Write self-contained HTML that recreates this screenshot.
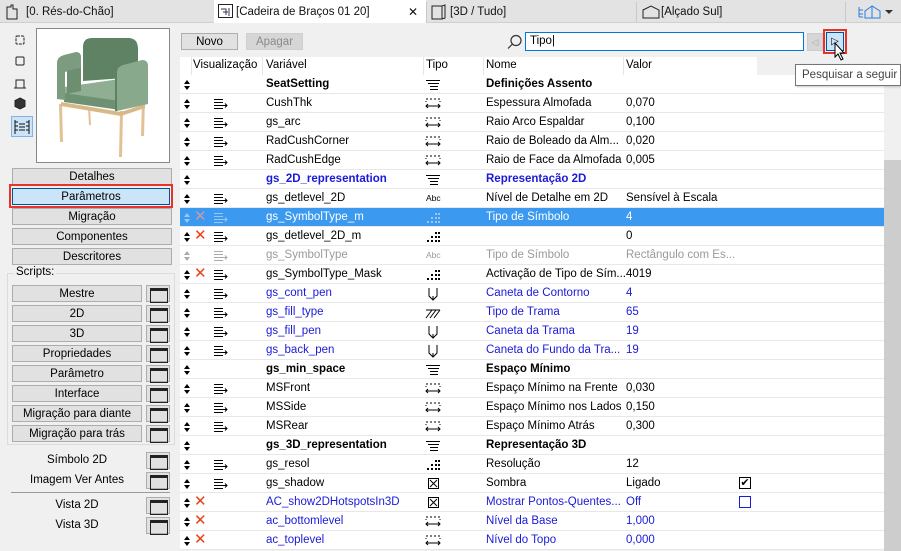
<!DOCTYPE html>
<html><head><meta charset="utf-8"><style>
*{box-sizing:border-box;margin:0;padding:0}
body{width:901px;height:551px;overflow:hidden;background:#f0f0f0;font-family:"Liberation Sans",sans-serif;font-size:11px;color:#000;position:relative}
.a{position:absolute}
.tab{position:absolute;top:0;height:23px;line-height:24px;font-size:11.5px;color:#111}
.btn{position:absolute;left:12px;width:160px;height:17px;border:1px solid #adadad;background:#e1e1e1;text-align:center;line-height:16px;font-size:11.5px}
.sb{position:absolute;left:12px;width:130px;height:17px;border:1px solid #adadad;background:#e1e1e1;text-align:center;line-height:16px;font-size:11.5px}
.ib{position:absolute;left:146px;width:24px;height:17px;border:1px solid #adadad;background:#e1e1e1}
.ib:after{content:"";position:absolute;left:3px;top:2px;width:16px;height:11px;border:1px solid #222;border-top:3px solid #222}
.lb{position:absolute;width:130px;left:12px;text-align:center;font-size:11.5px}
.row{position:absolute;left:180px;width:704px;height:19px;border-bottom:1px solid #e8e8e8;background:#fff;line-height:19px;font-size:11.5px}
.row span{position:absolute;top:0;white-space:nowrap}
.row svg{position:absolute}
.v{left:86px}.n{left:306px}.val{left:446px}
.x{left:14px;color:#e8401c;font-size:15px;line-height:18px}
.blue{color:#1a1ad8}.b{font-weight:bold}.g{color:#9a9a9a}
.sel{background:#3b99f0;color:#fff}
.sel span{color:#fff}
</style></head><body>
<svg width="0" height="0" style="position:absolute">
<defs>
<symbol id="ar" viewBox="0 0 8 12"><path d="M4 1l3 4h-6zM4 11l3-4h-6z" fill="currentColor"/></symbol>
<symbol id="pi" viewBox="0 0 16 12"><path d="M1 1.5h9M1 4.5h9M1 7.5h9M1 10.5h9M8 7.5h6M12 5.5l2 2-2 2" fill="none" stroke="currentColor"/></symbol>
<symbol id="len" viewBox="0 0 16 12"><path d="M1 1h2M5 1h2M9 1h2M13 1h2M1 3v1M15 3v1M1 8h14M3 6l-2 2 2 2M13 6l2 2-2 2" fill="none" stroke="currentColor"/></symbol>
<symbol id="tt" viewBox="0 0 16 12"><path d="M1 1.5h14M3 4.5h11M5 7.5h8M5 10.5h8" fill="none" stroke="currentColor"/></symbol>
<symbol id="int" viewBox="0 0 16 12"><path d="M10 1h2v2h-2zM13 1h2v2h-2zM10 5h2v2h-2zM13 5h2v2h-2zM6 5h2v2h-2zM2 9h2v2h-2zM6 9h2v2h-2zM10 9h2v2h-2zM13 9h2v2h-2z" fill="currentColor"/></symbol>
<symbol id="pen" viewBox="0 0 16 14"><path d="M4 1v8l4 4 4-4v-8M8 9v4" fill="none" stroke="currentColor"/></symbol>
<symbol id="fil" viewBox="0 0 16 12"><path d="M1 11l6-8M5 11l6-8M9 11l6-8M1 3h14" fill="none" stroke="currentColor"/></symbol>
<symbol id="bo" viewBox="0 0 16 12"><rect x="3.5" y="0.5" width="10" height="10" fill="none" stroke="currentColor"/><path d="M5 2l7 7M12 2l-7 7" stroke="currentColor"/></symbol>
</defs></svg>
<!-- tab bar -->
<div class="a" style="left:0;top:0;width:901px;height:23px;background:#e3e3e3;border-bottom:1px solid #d0d0d0"></div>
<div class="a" style="left:214px;top:0;width:212px;height:23px;background:#fff"></div>
<div class="a" style="left:426px;top:2px;width:1px;height:20px;background:#c8c8c8"></div>
<div class="a" style="left:636px;top:2px;width:1px;height:20px;background:#c8c8c8"></div>
<div class="a" style="left:845px;top:2px;width:1px;height:20px;background:#c8c8c8"></div>
<svg class="a" style="left:6px;top:4px" width="20" height="16"><path d="M1 3h4v-2h2v4h4v10h-10z" fill="none" stroke="#222"/></svg>
<div class="tab" style="left:26px">[0. Rés-do-Chão]</div>
<svg class="a" style="left:218px;top:4px" width="16" height="15"><rect x="0.5" y="0.5" width="14" height="13" fill="#fff" stroke="#222"/><path d="M3 5h5v6M5 8h5M11 4v8" stroke="#335" fill="none"/></svg>
<div class="tab" style="left:236px">[Cadeira de Braços 01 20]</div>
<div class="tab" style="left:408px;font-size:12px">✕</div>
<svg class="a" style="left:431px;top:4px" width="16" height="16"><path d="M1 2h10l3 -1v13l-3 1h-10z M11 2v13" fill="none" stroke="#222"/></svg>
<div class="tab" style="left:450px">[3D / Tudo]</div>
<svg class="a" style="left:642px;top:5px" width="18" height="14"><path d="M1 5l8-4 8 4v8h-16z" fill="none" stroke="#222"/></svg>
<div class="tab" style="left:661px">[Alçado Sul]</div>
<svg class="a" style="left:857px;top:5px" width="40" height="14"><path d="M2 2v10M2 5h4M2 9h4M2 12h4" stroke="#2a7de1" fill="none"/><path d="M8 6l7-5 8 5v7h-15zM15 1v12" stroke="#2a7de1" fill="none"/><path d="M28 5h8l-4 4z" fill="#333"/></svg>

<!-- left panel icons -->
<svg class="a" style="left:13px;top:33px" width="16" height="100" fill="none" stroke="#222">
<rect x="3" y="3" width="8" height="8" rx="1" stroke-dasharray="3 1"/>
<rect x="3" y="24" width="8" height="8" rx="1"/>
<path d="M3 55v-8h8v8M1 55h12"/>
<path d="M7 65l5 2.5v6l-5 2.5-5-2.5v-6z" fill="#333"/>
</svg>
<div class="a" style="left:11px;top:116px;width:22px;height:21px;background:#cde4f7;border:1px solid #7eb4ea"></div>
<svg class="a" style="left:13px;top:119px" width="18" height="16" fill="none" stroke="#111"><path d="M2 1v14M16 1v14M2 3h3M2 7h3M2 11h3M13 3h3M13 7h3M13 11h3M6 5h6M6 8h6M6 11h6"/></svg>
<!-- preview -->
<div class="a" style="left:36px;top:28px;width:134px;height:135px;background:#fff;border:1px solid #888"></div>
<svg class="a" style="left:37px;top:29px" width="132" height="132">
<path d="M22 75h3l1 38h-3zM83 82h3l-1 46h-3zM105 70h3l-1 37h-3zM51 78h2l1 18h-2z" fill="#e2c295"/>
<path d="M24 73l60 10 24-8v4l-24 8-60-10z" fill="#d9b888"/>
<path d="M46 18q0-9 9-9h36q10 0 10 11v28l-55 4z" fill="#5f8264"/>
<path d="M27 58l56-8 20 5v8l-20 9-56-6z" fill="#8fae92"/>
<path d="M27 64l56 8v9l-56-8z" fill="#6f9173"/>
<path d="M20 34q0-6 7-8l12-3q5 0 5 5v10l-16 5v28l-8-1z" fill="#7c9b7f"/>
<path d="M30 42l14-4v24l-14 3z" fill="#6e8e72"/>
<path d="M80 43q0-5 6-7l19-5q6 0 6 6v38l-31 7z" fill="#88a98b"/>
<path d="M80 44l-2 1v37l2 0z" fill="#5f8064"/>
</svg>

<div class="btn" style="top:168px">Detalhes</div>
<div class="a" style="left:9px;top:184px;width:164px;height:24px;border:2px solid #e8332a"></div>
<div class="btn" style="top:188px;background:#cce4f7;border-color:#005499;left:12px;width:158px">Parâmetros</div>
<div class="btn" style="top:208px">Migração</div>
<div class="btn" style="top:228px">Componentes</div>
<div class="btn" style="top:248px">Descritores</div>
<div class="a" style="left:7px;top:273px;width:168px;height:172px;border:1px solid #dcdcdc"></div>
<div class="a" style="left:14px;top:266px;background:#f0f0f0;padding:0 2px;font-size:11.5px">Scripts:</div>
<div class="sb" style="top:285px">Mestre</div><div class="ib" style="top:285px"></div>
<div class="sb" style="top:305px">2D</div><div class="ib" style="top:305px"></div>
<div class="sb" style="top:325px">3D</div><div class="ib" style="top:325px"></div>
<div class="sb" style="top:345px">Propriedades</div><div class="ib" style="top:345px"></div>
<div class="sb" style="top:365px">Parâmetro</div><div class="ib" style="top:365px"></div>
<div class="sb" style="top:385px">Interface</div><div class="ib" style="top:385px"></div>
<div class="sb" style="top:405px">Migração para diante</div><div class="ib" style="top:405px"></div>
<div class="sb" style="top:425px">Migração para trás</div><div class="ib" style="top:425px"></div>
<div class="lb" style="top:454px">Símbolo 2D</div><div class="ib" style="top:452px"></div>
<div class="lb" style="top:474px">Imagem Ver Antes</div><div class="ib" style="top:472px"></div>
<div class="a" style="left:11px;top:492px;width:159px;height:1px;background:#999"></div>
<div class="lb" style="top:499px">Vista 2D</div><div class="ib" style="top:497px"></div>
<div class="lb" style="top:519px">Vista 3D</div><div class="ib" style="top:517px"></div>

<!-- toolbar -->
<div class="a" style="left:181px;top:33px;width:57px;height:17px;border:1px solid #adadad;background:#e1e1e1;text-align:center;line-height:16px;font-size:11.5px">Novo</div>
<div class="a" style="left:246px;top:33px;width:57px;height:17px;border:1px solid #cfcfcf;background:#d6d6d6;text-align:center;line-height:16px;font-size:11.5px;color:#8a8a8a">Apagar</div>
<svg class="a" style="left:507px;top:34px" width="16" height="16" fill="none" stroke="#333" stroke-width="1.2"><circle cx="9" cy="6.5" r="5"/><path d="M5.5 10l-4.5 4.5"/></svg>
<div class="a" style="left:525px;top:32px;width:279px;height:19px;background:#fff;border:1px solid #0078d7;padding-left:4px;line-height:17px;font-size:11.5px">Tipo|</div>
<div class="a" style="left:807px;top:33px;width:16px;height:18px;background:#d6d6d6;border:1px solid #ccc;color:#aaa;font-size:9px;text-align:center;line-height:16px">◁</div>
<div class="a" style="left:823px;top:29px;width:24px;height:25px;border:2px solid #e8332a"></div>
<div class="a" style="left:826px;top:32px;width:18px;height:19px;background:#cce4f7;border:1px solid #005499;font-size:10px;text-align:center;line-height:17px">▷</div>
<svg class="a" style="left:834px;top:42px" width="14" height="20"><path d="M1 1v14l3-3 3 6 2-1-3-6h4z" fill="#fff" stroke="#000"/></svg>

<!-- table header -->
<div class="a" style="left:180px;top:57px;width:577px;height:18px;background:#fff"></div>
<div class="a" style="left:191px;top:57px;width:1px;height:18px;background:#e5e5e5"></div>
<div class="a" style="left:262px;top:57px;width:1px;height:18px;background:#e5e5e5"></div>
<div class="a" style="left:423px;top:57px;width:1px;height:18px;background:#e5e5e5"></div>
<div class="a" style="left:483px;top:57px;width:1px;height:18px;background:#e5e5e5"></div>
<div class="a" style="left:623px;top:57px;width:1px;height:18px;background:#e5e5e5"></div>
<div class="a" style="left:193px;top:59px;font-size:11.5px">Visualização</div>
<div class="a" style="left:266px;top:59px;font-size:11.5px">Variável</div>
<div class="a" style="left:426px;top:59px;font-size:11.5px">Tipo</div>
<div class="a" style="left:486px;top:59px;font-size:11.5px">Nome</div>
<div class="a" style="left:626px;top:59px;font-size:11.5px">Valor</div>

<!-- rows -->
<div class="row" style="top:75px"><svg style="left:3px;top:4px" width="8" height="12"><use href="#ar"/></svg><span class="v b">SeatSetting</span><svg style="left:245px;top:4px" width="16" height="12" color="#000"><use href="#tt"/></svg><span class="n b">Definições Assento</span></div>
<div class="row" style="top:94px"><svg style="left:3px;top:4px" width="8" height="12"><use href="#ar"/></svg><svg style="left:33px;top:4px" width="16" height="12" color="#000"><use href="#pi"/></svg><span class="v">CushThk</span><svg style="left:245px;top:4px" width="16" height="12" color="#000"><use href="#len"/></svg><span class="n">Espessura Almofada</span><span class="val">0,070</span></div>
<div class="row" style="top:113px"><svg style="left:3px;top:4px" width="8" height="12"><use href="#ar"/></svg><svg style="left:33px;top:4px" width="16" height="12" color="#000"><use href="#pi"/></svg><span class="v">gs_arc</span><svg style="left:245px;top:4px" width="16" height="12" color="#000"><use href="#len"/></svg><span class="n">Raio Arco Espaldar</span><span class="val">0,100</span></div>
<div class="row" style="top:132px"><svg style="left:3px;top:4px" width="8" height="12"><use href="#ar"/></svg><svg style="left:33px;top:4px" width="16" height="12" color="#000"><use href="#pi"/></svg><span class="v">RadCushCorner</span><svg style="left:245px;top:4px" width="16" height="12" color="#000"><use href="#len"/></svg><span class="n">Raio de Boleado da Alm...</span><span class="val">0,020</span></div>
<div class="row" style="top:151px"><svg style="left:3px;top:4px" width="8" height="12"><use href="#ar"/></svg><svg style="left:33px;top:4px" width="16" height="12" color="#000"><use href="#pi"/></svg><span class="v">RadCushEdge</span><svg style="left:245px;top:4px" width="16" height="12" color="#000"><use href="#len"/></svg><span class="n">Raio de Face da Almofada</span><span class="val">0,005</span></div>
<div class="row" style="top:170px"><svg style="left:3px;top:4px" width="8" height="12"><use href="#ar"/></svg><span class="v b blue">gs_2D_representation</span><svg style="left:245px;top:4px" width="16" height="12" color="#000"><use href="#tt"/></svg><span class="n b blue">Representação 2D</span></div>
<div class="row" style="top:189px"><svg style="left:3px;top:4px" width="8" height="12"><use href="#ar"/></svg><svg style="left:33px;top:4px" width="16" height="12" color="#000"><use href="#pi"/></svg><span class="v">gs_detlevel_2D</span><span style="left:246px;font-size:8.5px">Abc</span><span class="n">Nível de Detalhe em 2D</span><span class="val">Sensível à Escala</span></div>
<div class="row sel" style="top:208px"><svg style="left:3px;top:4px" width="8" height="12" color="#9cc6f2"><use href="#ar"/></svg><span class="x" style="color:#c89aa8">✕</span><svg style="left:33px;top:4px" width="16" height="12" color="#9cc6f2"><use href="#pi"/></svg><span class="v">gs_SymbolType_m</span><svg style="left:245px;top:4px" width="16" height="12" color="#9cc6f2"><use href="#int"/></svg><span class="n">Tipo de Símbolo</span><span class="val">4</span></div>
<div class="row" style="top:227px"><svg style="left:3px;top:4px" width="8" height="12"><use href="#ar"/></svg><span class="x">✕</span><svg style="left:33px;top:4px" width="16" height="12" color="#000"><use href="#pi"/></svg><span class="v">gs_detlevel_2D_m</span><svg style="left:245px;top:4px" width="16" height="12" color="#000"><use href="#int"/></svg><span class="val">0</span></div>
<div class="row g" style="top:246px"><svg style="left:3px;top:4px" width="8" height="12" color="#aaa"><use href="#ar"/></svg><svg style="left:33px;top:4px" width="16" height="12" color="#aaa"><use href="#pi"/></svg><span class="v">gs_SymbolType</span><span style="left:246px;font-size:8.5px">Abc</span><span class="n">Tipo de Símbolo</span><span class="val">Rectângulo com Es...</span></div>
<div class="row" style="top:265px"><svg style="left:3px;top:4px" width="8" height="12"><use href="#ar"/></svg><span class="x">✕</span><svg style="left:33px;top:4px" width="16" height="12" color="#000"><use href="#pi"/></svg><span class="v">gs_SymbolType_Mask</span><svg style="left:245px;top:4px" width="16" height="12" color="#000"><use href="#int"/></svg><span class="n">Activação de Tipo de Sím...</span><span class="val">4019</span></div>
<div class="row blue" style="top:284px"><svg style="left:3px;top:4px" width="8" height="12" color="#000"><use href="#ar"/></svg><svg style="left:33px;top:4px" width="16" height="12" color="#000"><use href="#pi"/></svg><span class="v">gs_cont_pen</span><svg style="left:245px;top:3px" width="16" height="14" color="#000"><use href="#pen"/></svg><span class="n">Caneta de Contorno</span><span class="val">4</span></div>
<div class="row blue" style="top:303px"><svg style="left:3px;top:4px" width="8" height="12" color="#000"><use href="#ar"/></svg><svg style="left:33px;top:4px" width="16" height="12" color="#000"><use href="#pi"/></svg><span class="v">gs_fill_type</span><svg style="left:245px;top:4px" width="16" height="12" color="#000"><use href="#fil"/></svg><span class="n">Tipo de Trama</span><span class="val">65</span></div>
<div class="row blue" style="top:322px"><svg style="left:3px;top:4px" width="8" height="12" color="#000"><use href="#ar"/></svg><svg style="left:33px;top:4px" width="16" height="12" color="#000"><use href="#pi"/></svg><span class="v">gs_fill_pen</span><svg style="left:245px;top:3px" width="16" height="14" color="#000"><use href="#pen"/></svg><span class="n">Caneta da Trama</span><span class="val">19</span></div>
<div class="row blue" style="top:341px"><svg style="left:3px;top:4px" width="8" height="12" color="#000"><use href="#ar"/></svg><svg style="left:33px;top:4px" width="16" height="12" color="#000"><use href="#pi"/></svg><span class="v">gs_back_pen</span><svg style="left:245px;top:3px" width="16" height="14" color="#000"><use href="#pen"/></svg><span class="n">Caneta do Fundo da Tra...</span><span class="val">19</span></div>
<div class="row" style="top:360px"><svg style="left:3px;top:4px" width="8" height="12"><use href="#ar"/></svg><span class="v b">gs_min_space</span><svg style="left:245px;top:4px" width="16" height="12" color="#000"><use href="#tt"/></svg><span class="n b">Espaço Mínimo</span></div>
<div class="row" style="top:379px"><svg style="left:3px;top:4px" width="8" height="12"><use href="#ar"/></svg><svg style="left:33px;top:4px" width="16" height="12" color="#000"><use href="#pi"/></svg><span class="v">MSFront</span><svg style="left:245px;top:4px" width="16" height="12" color="#000"><use href="#len"/></svg><span class="n">Espaço Mínimo na Frente</span><span class="val">0,030</span></div>
<div class="row" style="top:398px"><svg style="left:3px;top:4px" width="8" height="12"><use href="#ar"/></svg><svg style="left:33px;top:4px" width="16" height="12" color="#000"><use href="#pi"/></svg><span class="v">MSSide</span><svg style="left:245px;top:4px" width="16" height="12" color="#000"><use href="#len"/></svg><span class="n">Espaço Mínimo nos Lados</span><span class="val">0,150</span></div>
<div class="row" style="top:417px"><svg style="left:3px;top:4px" width="8" height="12"><use href="#ar"/></svg><svg style="left:33px;top:4px" width="16" height="12" color="#000"><use href="#pi"/></svg><span class="v">MSRear</span><svg style="left:245px;top:4px" width="16" height="12" color="#000"><use href="#len"/></svg><span class="n">Espaço Mínimo Atrás</span><span class="val">0,300</span></div>
<div class="row" style="top:436px"><svg style="left:3px;top:4px" width="8" height="12"><use href="#ar"/></svg><span class="v b">gs_3D_representation</span><svg style="left:245px;top:4px" width="16" height="12" color="#000"><use href="#tt"/></svg><span class="n b">Representação 3D</span></div>
<div class="row" style="top:455px"><svg style="left:3px;top:4px" width="8" height="12"><use href="#ar"/></svg><svg style="left:33px;top:4px" width="16" height="12" color="#000"><use href="#pi"/></svg><span class="v">gs_resol</span><svg style="left:245px;top:4px" width="16" height="12" color="#000"><use href="#int"/></svg><span class="n">Resolução</span><span class="val">12</span></div>
<div class="row" style="top:474px"><svg style="left:3px;top:4px" width="8" height="12"><use href="#ar"/></svg><svg style="left:33px;top:4px" width="16" height="12" color="#000"><use href="#pi"/></svg><span class="v">gs_shadow</span><svg style="left:245px;top:4px" width="16" height="12" color="#000"><use href="#bo"/></svg><span class="n">Sombra</span><span class="val">Ligado</span><span style="left:559px;top:3px;width:12px;height:12px;border:1px solid #000;line-height:10px;font-size:11px;text-align:center">✔</span></div>
<div class="row blue" style="top:493px"><svg style="left:3px;top:4px" width="8" height="12" color="#000"><use href="#ar"/></svg><span class="x">✕</span><span class="v">AC_show2DHotspotsIn3D</span><svg style="left:245px;top:4px" width="16" height="12" color="#000"><use href="#bo"/></svg><span class="n">Mostrar Pontos-Quentes...</span><span class="val">Off</span><span style="left:559px;top:3px;width:12px;height:12px;border:1px solid #1a1ad8"></span></div>
<div class="row blue" style="top:512px"><svg style="left:3px;top:4px" width="8" height="12" color="#000"><use href="#ar"/></svg><span class="x">✕</span><span class="v">ac_bottomlevel</span><svg style="left:245px;top:4px" width="16" height="12" color="#000"><use href="#len"/></svg><span class="n">Nível da Base</span><span class="val">1,000</span></div>
<div class="row blue" style="top:531px"><svg style="left:3px;top:4px" width="8" height="12" color="#000"><use href="#ar"/></svg><span class="x">✕</span><span class="v">ac_toplevel</span><svg style="left:245px;top:4px" width="16" height="12" color="#000"><use href="#len"/></svg><span class="n">Nível do Topo</span><span class="val">0,000</span></div>

<!-- scrollbar -->
<div class="a" style="left:884px;top:75px;width:17px;height:476px;background:#f0f0f0"></div>
<div class="a" style="left:884px;top:160px;width:17px;height:391px;background:#cdcdcd"></div>
<!-- tooltip -->
<div class="a" style="left:795px;top:64px;width:106px;height:22px;background:#fff;border:1px solid #767676;padding-left:6px;line-height:20px;font-size:11.5px;color:#444;box-shadow:1px 1px 2px rgba(0,0,0,.2)">Pesquisar a seguir</div>
</body></html>
